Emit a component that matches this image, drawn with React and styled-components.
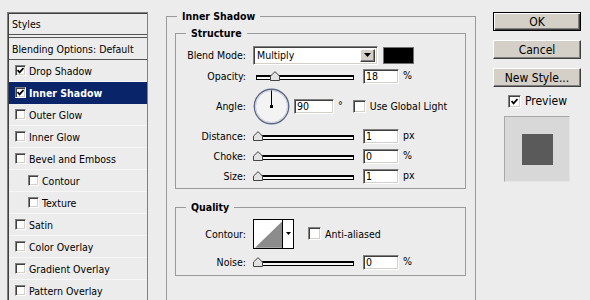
import React from "react";
import styled, { createGlobalStyle, css } from "styled-components";

const GlobalStyle = createGlobalStyle`
  body {
    margin: 0;
    background: #ececec;
    font-family: "DejaVu Sans Condensed", "DejaVu Sans", sans-serif;
    font-size: 10.5px;
    color: #000;
    overflow: hidden;
  }
`;

//Layout
const Window = styled.div`
  display: flex;
  align-items: flex-start;
  height: 300px;
  padding-left: 7px;
`;

//Styles list
const StylesPanel = styled.div`
  width: 141px;
  min-height: 300px;
  margin-top: 12px;
  box-sizing: border-box;
  border: 1px solid #808080;
  box-shadow: inset 1px 1px #404040;
  padding: 1px 0 0 1px;
  flex: none;
`;

const PanelHeader = styled.div`
  height: 20px;
  display: flex;
  align-items: center;
  padding-left: 3px;
  border-bottom: 1px solid #555;
`;

const PanelTop = styled.div`
  margin-top: 2px;
  height: 21px;
  display: flex;
  align-items: center;
  padding-left: 3px;
  border-top: 1px solid #555;
  border-bottom: 1px solid #555;
`;

const PanelItem = styled.div`
  height: 22px;
  box-sizing: border-box;
  display: flex;
  align-items: center;
  gap: 3px;
  padding-left: ${(p) => (p.$indent ? 19 : 6)}px;
  border-bottom: 1px solid #f7f7f7;
  ${(p) =>
    p.$selected &&
    css`
      background: #0a246a;
      color: #fff;
      font-weight: bold;
      border-bottom-color: #0a246a;
    `}
`;

//Checkbox
const Box = styled.span`
  display: inline-flex;
  align-items: center;
  justify-content: center;
  width: ${(p) => p.$size}px;
  height: ${(p) => p.$size}px;
  box-sizing: border-box;
  background: #fff;
  border: 1px solid;
  border-color: #808080 #fff #fff #808080;
  box-shadow: inset 1px 1px #404040, inset -1px -1px #d4d0c8;
  flex: none;
`;

const Check = ({ checked, size = 13 }) => (
  <Box $size={size}>
    {checked && (
      <svg width="7" height="7" viewBox="0 0 7 7">
        <path d="M0.5 3 L2.6 5.4 L6.5 1" fill="none" stroke="#000" strokeWidth="1.8" />
      </svg>
    )}
  </Box>
);

//Settings area
const Main = styled.fieldset`
  width: 310px;
  min-height: 320px;
  box-sizing: border-box;
  margin: 9px 0 0 18px;
  padding: 3px 9px 0 8px;
  border: 1px solid #9a9a9a;
  flex: none;
  min-inline-size: 0;
`;

const Legend = styled.legend`
  font-weight: bold;
  line-height: 14px;
  padding: 0 5px;
  margin-left: ${(p) => p.$offset}px;
`;

const Section = styled.fieldset`
  margin: ${(p) => p.$gap || 0}px 0 0;
  padding: ${(p) => p.$top}px 0 ${(p) => p.$bottom}px;
  border: 1px solid #9a9a9a;
  min-inline-size: 0;
`;

const Row = styled.div`
  display: flex;
  align-items: center;
  height: ${(p) => p.$h}px;
  margin-top: ${(p) => p.$mt || 0}px;
`;

const Label = styled.span`
  width: 70px;
  margin-right: 7px;
  text-align: right;
  flex: none;
`;

const Select = styled.div`
  width: 125px;
  height: 19px;
  box-sizing: border-box;
  display: flex;
  background: #fff;
  border: 1px solid;
  border-color: #808080 #fff #fff #808080;
  box-shadow: inset 1px 1px #404040, inset -1px -1px #d4d0c8;
  padding: 2px;
`;

const SelectValue = styled.span`
  flex: 1;
  display: flex;
  align-items: center;
  padding-left: 1px;
`;

const DropButton = styled.span`
  width: 15px;
  display: flex;
  align-items: center;
  justify-content: center;
  background: #d4d0c8;
  box-sizing: border-box;
  border: 1px solid;
  border-color: #fff #404040 #404040 #fff;
  box-shadow: inset -1px -1px #808080;
`;

const Arrow = () => (
  <svg width="7" height="4" viewBox="0 0 7 4">
    <path d="M0 0 H7 L3.5 4 Z" fill="#000" />
  </svg>
);

const Swatch = styled.span`
  width: 31px;
  height: 17px;
  box-sizing: border-box;
  margin-left: 5px;
  background: #000;
  border: 1px solid #707070;
`;

const SliderWrap = styled.div`
  position: relative;
  width: 106px;
  height: 14px;
  flex: none;
`;

const Track = styled.div`
  margin: 6px 0 0 3px;
  width: 98px;
  height: 5px;
  box-sizing: border-box;
  background: #f6f6f6;
  border: 1px solid #000;
  border-top-width: 2px;
`;

const Thumb = styled.svg`
  position: absolute;
  top: 2px;
`;

const Slider = ({ value }) => (
  <SliderWrap>
    <Track />
    <Thumb width="10" height="10" viewBox="0 0 10 10" style={{ left: value * 0.96 }}>
      <path d="M0.5 9.5 V5 L5 0.7 L9.5 5 V9.5 Z" fill="#e2e2e2" stroke="#444" />
    </Thumb>
  </SliderWrap>
);

const NumberBox = styled.input`
  width: ${(p) => p.$w || 36}px;
  height: 15px;
  box-sizing: border-box;
  margin: 0 0 0 4px;
  padding: 0 2px;
  font: inherit;
  background: #fff;
  border: 1px solid;
  border-color: #808080 #fff #fff #808080;
  box-shadow: inset 1px 1px #404040, inset -1px -1px #d4d0c8;
  outline: none;
`;

const Unit = styled.span`
  margin-left: 4px;
  margin-top: -3px;
`;

const CheckLabel = styled.label`
  display: flex;
  align-items: center;
  gap: 4px;
  margin-left: ${(p) => p.$ml || 0}px;
`;

const Dial = ({ angle }) => {
  const r = (angle * Math.PI) / 180;
  const x = 18 + 16 * Math.cos(r);
  const y = 18 - 16 * Math.sin(r);
  return (
    <svg width="37" height="37" viewBox="0 0 37 37" style={{ flex: "none" }}>
      <circle cx="18.5" cy="18.5" r="17.2" fill="#f3f3f3" stroke="#5d6785" strokeWidth="1.4" />
      <circle cx="18.5" cy="18.5" r="16" fill="none" stroke="#c9cdd8" strokeWidth="1" />
      <line x1="18.5" y1="18.5" x2={x + 0.5} y2={y + 0.5} stroke="#000" strokeWidth="1" />
      <rect x="17" y="17" width="3" height="3" fill="#000" />
    </svg>
  );
};

const ContourPicker = styled.div`
  width: 41px;
  height: 30px;
  box-sizing: border-box;
  display: flex;
  border: 1px solid #000;
  background: #fff;
  flex: none;
`;

const ContourArrow = styled.span`
  width: 10px;
  display: flex;
  align-items: center;
  justify-content: center;
  border-left: 1px solid #000;
`;

//Buttons column
const SideColumn = styled.div`
  display: flex;
  flex-direction: column;
  width: 88px;
  margin: 12px 0 0 17px;
  flex: none;
`;

const Button = styled.button`
  width: 88px;
  height: 19px;
  box-sizing: border-box;
  margin: 0 0 9px;
  padding: 0;
  background: #d4d0c8;
  font-family: inherit;
  font-size: 12px;
  color: #000;
  border: 1px solid;
  border-color: #fff #404040 #404040 #fff;
  box-shadow: inset -1px -1px #808080;
  ${(p) =>
    p.$default &&
    css`
      border-color: #000;
      box-shadow: inset 1px 1px #fff, inset -1px -1px #404040, inset -2px -2px #808080;
    `}
`;

const PreviewToggle = styled.label`
  display: flex;
  align-items: center;
  gap: 4px;
  margin: -2px 0 0 15px;
  font-size: 12px;
`;

const PreviewBox = styled.div`
  width: 66px;
  height: 66px;
  box-sizing: border-box;
  margin: 8px 0 0 11px;
  display: flex;
  align-items: center;
  justify-content: center;
  background: #d8d8d8;
  border: 1px solid;
  border-color: #a8a8a8 #e4e4e4 #e4e4e4 #a8a8a8;
`;

const PreviewSwatch = styled.div`
  width: 31px;
  height: 31px;
  background: #5a5a5a;
`;

//Data
const styleItems = [
  { name: "Drop Shadow", checked: true },
  { name: "Inner Shadow", checked: true, selected: true },
  { name: "Outer Glow" },
  { name: "Inner Glow" },
  { name: "Bevel and Emboss" },
  { name: "Contour", indent: true },
  { name: "Texture", indent: true },
  { name: "Satin" },
  { name: "Color Overlay" },
  { name: "Gradient Overlay" },
  { name: "Pattern Overlay" },
];

const sliders = [
  { label: "Distance:", value: 1, unit: "px", pos: 0 },
  { label: "Choke:", value: 0, unit: "%", pos: 0 },
  { label: "Size:", value: 1, unit: "px", pos: 0 },
];

const App = () => {
  return (
    <Window>
      <GlobalStyle />
      <StylesPanel>
        <PanelHeader>Styles</PanelHeader>
        <PanelTop>Blending Options: Default</PanelTop>
        {styleItems.map((item) => (
          <PanelItem key={item.name} $indent={item.indent} $selected={item.selected}>
            <Check checked={item.checked} size={11} />
            {item.name}
          </PanelItem>
        ))}
      </StylesPanel>

      <Main>
        <Legend $offset={2}>Inner Shadow</Legend>
        <Section $top={4} $bottom={2}>
          <Legend $offset={10}>Structure</Legend>
          <Row $h={22}>
            <Label>Blend Mode:</Label>
            <Select>
              <SelectValue>Multiply</SelectValue>
              <DropButton>
                <Arrow />
              </DropButton>
            </Select>
            <Swatch />
          </Row>
          <Row $h={20}>
            <Label>Opacity:</Label>
            <Slider value={18} />
            <NumberBox readOnly value="18" />
            <Unit>%</Unit>
          </Row>
          <Row $h={40}>
            <Label>Angle:</Label>
            <Dial angle={90} />
            <NumberBox readOnly value="90" $w={40} />
            <Unit>°</Unit>
            <CheckLabel $ml={10}>
              <Check />
              Use Global Light
            </CheckLabel>
          </Row>
          {sliders.map((s) => (
            <Row $h={20} key={s.label}>
              <Label>{s.label}</Label>
              <Slider value={s.pos} />
              <NumberBox readOnly value={s.value} />
              <Unit>{s.unit}</Unit>
            </Row>
          ))}
        </Section>

        <Section $gap={11} $top={4} $bottom={3}>
          <Legend $offset={10}>Quality</Legend>
          <Row $h={31}>
            <Label>Contour:</Label>
            <ContourPicker>
              <svg width="29" height="28" viewBox="0 0 29 28">
                <path d="M1 28 L29 1 V28 Z" fill="#8c8c8c" />
              </svg>
              <ContourArrow>
                <svg width="5" height="3" viewBox="0 0 5 3">
                  <path d="M0 0 H5 L2.5 3 Z" fill="#000" />
                </svg>
              </ContourArrow>
            </ContourPicker>
            <CheckLabel $ml={14}>
              <Check />
              Anti-aliased
            </CheckLabel>
          </Row>
          <Row $h={20} $mt={3}>
            <Label>Noise:</Label>
            <Slider value={0} />
            <NumberBox readOnly value="0" />
            <Unit>%</Unit>
          </Row>
        </Section>
      </Main>

      <SideColumn>
        <Button $default>OK</Button>
        <Button>Cancel</Button>
        <Button>New Style...</Button>
        <PreviewToggle>
          <Check checked />
          Preview
        </PreviewToggle>
        <PreviewBox>
          <PreviewSwatch />
        </PreviewBox>
      </SideColumn>
    </Window>
  );
};

export default App;
